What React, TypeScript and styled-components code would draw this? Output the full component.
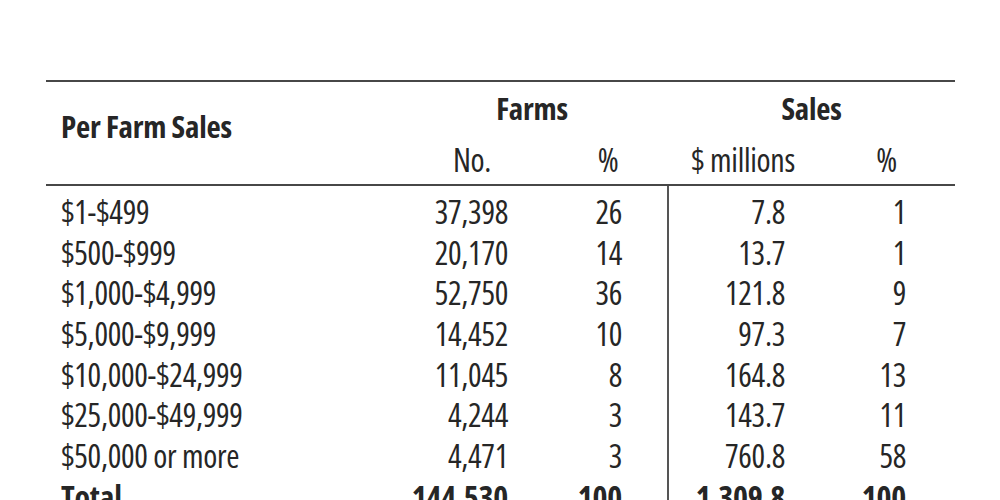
import React from "react";
import styled, { createGlobalStyle } from "styled-components";

const GlobalStyle = createGlobalStyle`
  html, body { margin: 0; padding: 0; background: #ffffff; }
  body {
    font-family: "Open Sans", "Liberation Sans", sans-serif;
    font-stretch: 75%;
    color: #262626;
  }
`;

const COLS = "350px 152px 120px 150px 137px";

const Page = styled.div`
  width: 1000px;
  height: 500px;
  overflow: hidden;
  padding: 80px 45px 0 46px;
  box-sizing: border-box;
`;

const Table = styled.div`
  width: 909px;
  border-top: 2px solid #474747;
`;

const Head = styled.div`
  display: grid;
  grid-template-columns: ${COLS};
  grid-template-rows: 40px 52px;
  padding: 6px 0 4px;
  border-bottom: 2px solid #474747;
`;

const StubHead = styled.div`
  grid-column: 1;
  grid-row: 1 / span 2;
  align-self: start;
  margin-top: 18px;
  padding-left: 15px;
  font-size: 31px;
  font-weight: 720;
  line-height: 40px;
  letter-spacing: -0.2px;
`;

const GroupHead = styled.div<{ $col: string }>`
  grid-column: ${(p) => p.$col};
  grid-row: 1;
  text-align: center;
  font-size: 31px;
  font-weight: 720;
  line-height: 40px;
  letter-spacing: -0.2px;
`;

const SubHead = styled.div<{ $col: number }>`
  grid-column: ${(p) => p.$col};
  grid-row: 2;
  align-self: end;
  text-align: center;
  font-size: 32px;
  font-weight: 430;
  line-height: 40px;
  letter-spacing: -0.3px;
`;

const Body = styled.div`
  display: grid;
  grid-template-columns: ${COLS};
  grid-template-rows: 46.7px;
  grid-auto-rows: 40.7px;
`;

const Cell = styled.div<{ $pad: number; $num?: boolean; $rule?: boolean; $bold?: boolean }>`
  display: flex;
  align-items: flex-end;
  justify-content: ${(p) => (p.$num ? "flex-end" : "flex-start")};
  padding: ${(p) => (p.$num ? `0 ${p.$pad}px 0 0` : `0 0 0 ${p.$pad}px`)};
  border-left: ${(p) => (p.$rule ? "2px solid #555555" : "none")};
  margin-left: ${(p) => (p.$rule ? "-1px" : "0")};
  font-size: 32px;
  font-weight: ${(p) => (p.$bold ? 720 : 430)};
  line-height: 40.7px;
  letter-spacing: -0.3px;
  white-space: nowrap;
`;

type Row = { label: string; no: string; pct: string; sales: string; spct: string; bold?: boolean };

const rows: Row[] = [
  { label: "$1-$499", no: "37,398", pct: "26", sales: "7.8", spct: "1" },
  { label: "$500-$999", no: "20,170", pct: "14", sales: "13.7", spct: "1" },
  { label: "$1,000-$4,999", no: "52,750", pct: "36", sales: "121.8", spct: "9" },
  { label: "$5,000-$9,999", no: "14,452", pct: "10", sales: "97.3", spct: "7" },
  { label: "$10,000-$24,999", no: "11,045", pct: "8", sales: "164.8", spct: "13" },
  { label: "$25,000-$49,999", no: "4,244", pct: "3", sales: "143.7", spct: "11" },
  { label: "$50,000 or more", no: "4,471", pct: "3", sales: "760.8", spct: "58" },
  { label: "Total", no: "144,530", pct: "100", sales: "1,309.8", spct: "100", bold: true },
];

export default function App() {
  return (
    <>
      <GlobalStyle />
      <Page>
        <Table>
          <Head>
            <StubHead>Per Farm Sales</StubHead>
            <GroupHead $col="2 / span 2">Farms</GroupHead>
            <GroupHead $col="4 / span 2">Sales</GroupHead>
            <SubHead $col={2}>No.</SubHead>
            <SubHead $col={3}>%</SubHead>
            <SubHead $col={4}>$ millions</SubHead>
            <SubHead $col={5}>%</SubHead>
          </Head>
          <Body>
            {rows.map((r) => (
              <React.Fragment key={r.label}>
                <Cell $pad={15} $bold={r.bold}>{r.label}</Cell>
                <Cell $num $pad={40} $bold={r.bold}>{r.no}</Cell>
                <Cell $num $pad={46} $bold={r.bold}>{r.pct}</Cell>
                <Cell $num $rule $pad={33} $bold={r.bold}>{r.sales}</Cell>
                <Cell $num $pad={49} $bold={r.bold}>{r.spct}</Cell>
              </React.Fragment>
            ))}
          </Body>
        </Table>
      </Page>
    </>
  );
}
